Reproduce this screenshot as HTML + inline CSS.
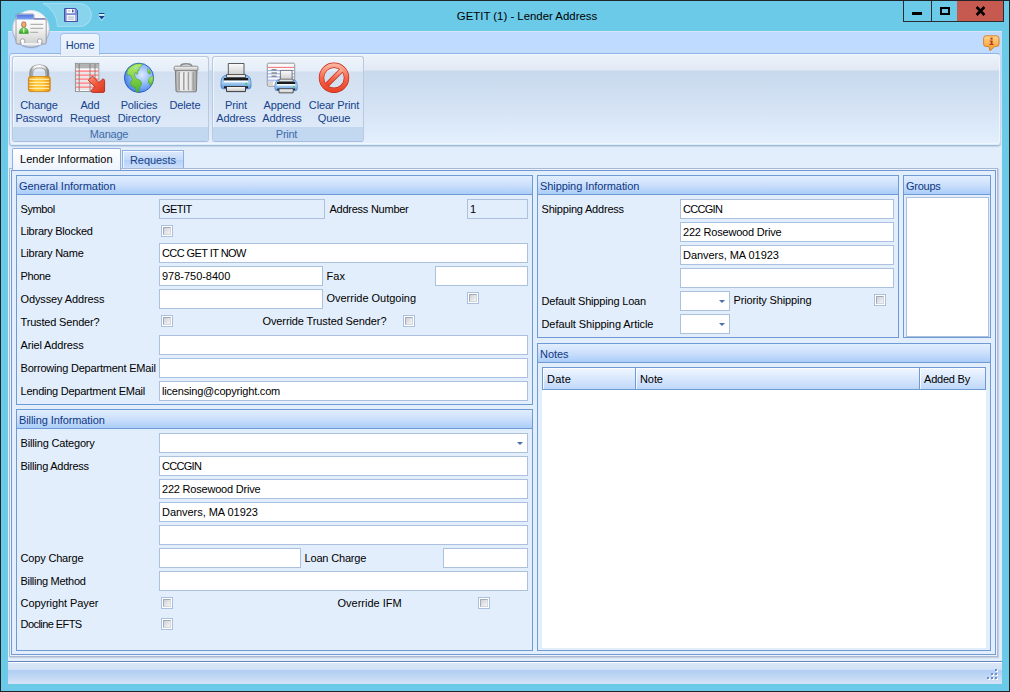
<!DOCTYPE html>
<html><head><meta charset="utf-8"><title>GETIT (1) - Lender Address</title>
<style>
*{box-sizing:border-box;margin:0;padding:0}
html,body{width:1010px;height:692px;overflow:hidden}
body{position:relative;background:#6bcae8;font-family:"Liberation Sans",sans-serif;font-size:11px;color:#000;letter-spacing:-0.15px}
.abs,.lbl,.inp,.cb,.grp,.ghd,.rb,.cmb{position:absolute}
#frame{position:absolute;left:0;top:0;width:1010px;height:692px;border:1px solid #1f2528;pointer-events:none;z-index:50}
#title{position:absolute;left:0;top:9px;width:1054px;text-align:center;font-size:11.4px;letter-spacing:0;color:#000;line-height:14px}
#client{position:absolute;left:8px;top:31px;width:994px;height:653px;background:#e3eefc}
#rhead{position:absolute;left:0;top:0;width:994px;height:115px;background:linear-gradient(#bfdbff 0,#bfdbff 40px,#dde9fb 113px,#e3eefc 115px);border-top:1px solid #d4e7fb}
#rpanel{position:absolute;left:1px;top:22px;width:992px;height:92px;border:1px solid;border-color:#8fb3e6 #c2d9f3 #d9effb #a6c5ee;border-radius:4px;background:linear-gradient(#eef3fa 0,#e1e9f5 16px,#c8d9ed 17px,#d5e3f5 56px,#e4f0fd 100%);box-shadow:inset 0 0 0 1px rgba(240,246,253,.9),0 1px 0 #a3b8d6,0 2px 1px rgba(160,180,210,.45)}
.rgrp{position:absolute;top:2px;height:86px;border:1px solid #b9c9df;border-bottom-color:#a9bedb;border-radius:3px;background:linear-gradient(#eef4fb 0,#e4edf8 14px,#d1dff0 15px,#dde9f8 69px);box-shadow:inset 1px 1px 0 rgba(255,255,255,.55)}
.rgrp .cap{position:absolute;left:0;right:0;bottom:0;height:14px;background:#c2d8f1;color:#3e6aaa;text-align:center;line-height:14px;padding-right:3px;letter-spacing:-.25px;border-radius:0 0 2px 2px}
.rb{top:0;text-align:center;color:#15428b;line-height:13px;white-space:nowrap}
.rb svg{display:block;margin:3px auto 5px}
.lbl{white-space:nowrap;line-height:13px;height:13px}
.inp{height:20px;background:#fff;border:1px solid #abc1de;line-height:18px;padding-left:2px;white-space:nowrap;overflow:hidden}
.inp.ro{background:#e3eefc}
.cb{width:12px;height:12px;border:1px solid #abbfe0;background:#fff;padding:1px}
.cb i{display:block;width:8px;height:8px;border:1px solid #a3abb8;border-right-color:#d4d7dc;border-bottom-color:#d4d7dc;background:linear-gradient(135deg,#cdd1d7,#f5f5f6)}
.grp{border:1px solid #6f9ad3;background:#e3eefc}
.ghd{left:0;top:0;right:0;height:19px;background:linear-gradient(#e2eefe 0,#c9defb 55%,#aacdf8 100%);border-bottom:1px solid #6f9ad3;color:#0f3884;line-height:20px;padding-left:2px}
.arrow{position:absolute;width:0;height:0;border-left:3px solid transparent;border-right:3px solid transparent;border-top:3px solid #4d6ea7}
</style></head><body>
<svg width="0" height="0" style="position:absolute"><defs>
<linearGradient id="gold" x1="0" y1="0" x2="1" y2="0"><stop offset="0" stop-color="#e8930c"/><stop offset=".35" stop-color="#ffc93c"/><stop offset=".65" stop-color="#ffc435"/><stop offset="1" stop-color="#e48a08"/></linearGradient>
<linearGradient id="steel" x1="0" y1="0" x2="1" y2="0"><stop offset="0" stop-color="#9a9a9a"/><stop offset=".2" stop-color="#f4f4f4"/><stop offset=".5" stop-color="#ffffff"/><stop offset=".8" stop-color="#e4e4e4"/><stop offset="1" stop-color="#8a8a8a"/></linearGradient>
<linearGradient id="redg" x1="0" y1="0" x2="1" y2="1"><stop offset="0" stop-color="#ff9a7a"/><stop offset=".5" stop-color="#f0553a"/><stop offset="1" stop-color="#d63a22"/></linearGradient>
<radialGradient id="sea" cx="60%" cy="40%" r="70%"><stop offset="0" stop-color="#dcebff"/><stop offset=".6" stop-color="#7aaaf5"/><stop offset="1" stop-color="#3a74dd"/></radialGradient>
<linearGradient id="land" x1="0" y1="0" x2="0" y2="1"><stop offset="0" stop-color="#b6ee6a"/><stop offset="1" stop-color="#4fb52a"/></linearGradient>
<linearGradient id="can" x1="0" y1="0" x2="1" y2="0"><stop offset="0" stop-color="#a8a8a8"/><stop offset=".3" stop-color="#eeeeee"/><stop offset=".7" stop-color="#e2e2e2"/><stop offset="1" stop-color="#9a9a9a"/></linearGradient>
<linearGradient id="lid" x1="0" y1="0" x2="0" y2="1"><stop offset="0" stop-color="#fafafa"/><stop offset="1" stop-color="#b9b9b9"/></linearGradient>
<linearGradient id="paper" x1="0" y1="0" x2="0" y2="1"><stop offset="0" stop-color="#fdfdfd"/><stop offset="1" stop-color="#c4c4c4"/></linearGradient>
<linearGradient id="prn" x1="0" y1="0" x2="0" y2="1"><stop offset="0" stop-color="#7fb2ea"/><stop offset=".5" stop-color="#a8d2f4"/><stop offset="1" stop-color="#5c93d6"/></linearGradient>
<linearGradient id="nog" x1="0" y1="0" x2="0" y2="1"><stop offset="0" stop-color="#ffb09a"/><stop offset=".5" stop-color="#f4694c"/><stop offset="1" stop-color="#e8452c"/></linearGradient>
</defs></svg>
<div id="title">GETIT (1) - Lender Address</div>
<div class="abs" style="left:903px;top:1px;width:101px;height:21px;border:1px solid #2a2d30;border-top:0"></div>
<div class="abs" style="left:931px;top:1px;width:1px;height:20px;background:#2a2d30"></div>
<div class="abs" style="left:957px;top:1px;width:46px;height:20px;background:#c75a50"></div>
<div class="abs" style="left:912px;top:12px;width:10px;height:3px;background:#000"></div>
<div class="abs" style="left:940px;top:7px;width:10px;height:8px;border:2px solid #000"></div>
<svg class="abs" style="left:975px;top:6px" width="12" height="10" viewBox="0 0 12 10"><path d="M1.6 1 L9.4 9 M9.4 1 L1.6 9" stroke="#000" stroke-width="2.6" fill="none"/></svg>
<div id="client">
 <div id="rhead"></div>
 <div class="abs" style="left:52px;top:2px;width:40px;height:22px;border:1px solid #a5c4ec;border-bottom:0;border-radius:4px 4px 0 0;background:linear-gradient(#edf4fd,#e6eef9);z-index:3;color:#15428b;text-align:center;line-height:22px">Home</div>
 <svg class="abs" style="left:975px;top:4px" width="17" height="17" viewBox="0 0 17 17"><defs><linearGradient id="ig" x1="0" y1="0" x2="0" y2="1"><stop offset="0" stop-color="#ffd28a"/><stop offset="1" stop-color="#f59a28"/></linearGradient></defs>
 <path d="M3 .8 H13.5 Q16 .8 16 3.3 V9 Q16 11.5 13.5 11.5 H11.8 L7 15.8 L6 11.5 H3 Q.6 11.5 .6 9 V3.3 Q.6 .8 3 .8 Z" fill="url(#ig)" stroke="#d67a1a" stroke-width=".9"/>
 <rect x="7.4" y="2.6" width="2.2" height="2" fill="#b4411c"/><path d="M6.6 5.6 H9.6 V9 H10.6 V10 H6.4 V9 H7.6 V6.6 H6.6 Z" fill="#b4411c"/></svg>
<!--FORM-->
<div class="abs" style="left:4px;top:117px;width:109px;height:22px;border:1px solid #8fb0de;border-bottom:0;border-radius:2px 2px 0 0;background:linear-gradient(#fdfeff,#eef4fd);z-index:4;line-height:20px;padding-left:7px;white-space:nowrap"><span style="letter-spacing:0.01px">Lender Information</span></div>
<div class="abs" style="left:114px;top:119px;width:62px;height:19px;border:1px solid #8fb0de;border-bottom:0;background:linear-gradient(#dce9fb 0,#c3dafa 50%,#b4d0f8 51%,#cfe1fb 100%);color:#15428b;line-height:19px;padding-left:7px;box-shadow:inset 1px 1px 0 rgba(255,255,255,.7);white-space:nowrap"><span style="letter-spacing:-0.07px">Requests</span></div>
<div class="abs" style="left:1px;top:137px;width:989px;height:489px;border:1px solid #a9b9d3;background:#eef3fb;box-shadow:1px 1px 1px #c5d0e2"></div>
<div class="abs" style="left:3px;top:139px;width:985px;height:485px;border:1px solid #6f9ad3;background:#e3eefc"></div>
<div class="grp" style="left:8px;top:144px;width:517px;height:230px"><div class="ghd"><span style="letter-spacing:-0.04px">General Information</span></div></div>
<div class="lbl" style="left:12.5px;top:172px;"><span style="letter-spacing:-0.38px">Symbol</span></div>
<div class="inp ro" style="left:151px;top:168px;width:166px"><span style="letter-spacing:-0.56px">GETIT</span></div>
<div class="lbl" style="left:321.5px;top:172px;"><span style="letter-spacing:-0.25px">Address Number</span></div>
<div class="inp ro" style="left:459px;top:168px;width:61px"><span style="letter-spacing:-0.33px">1</span></div>
<div class="lbl" style="left:12.5px;top:194px;"><span style="letter-spacing:-0.24px">Library Blocked</span></div>
<div class="cb" style="left:153px;top:194px"><i></i></div>
<div class="lbl" style="left:12.5px;top:216px;"><span style="letter-spacing:-0.25px">Library Name</span></div>
<div class="inp" style="left:151px;top:212px;width:369px"><span style="letter-spacing:-0.57px">CCC GET IT NOW</span></div>
<div class="lbl" style="left:12.5px;top:239px;"><span style="letter-spacing:-0.34px">Phone</span></div>
<div class="inp" style="left:151px;top:235px;width:164px"><span style="letter-spacing:-0.02px">978-750-8400</span></div>
<div class="lbl" style="left:318.5px;top:239px;"><span style="letter-spacing:0.02px">Fax</span></div>
<div class="inp" style="left:427px;top:235px;width:93px"></div>
<div class="lbl" style="left:12.5px;top:262px;"><span style="letter-spacing:-0.12px">Odyssey Address</span></div>
<div class="inp" style="left:151px;top:258px;width:164px"></div>
<div class="lbl" style="left:318.5px;top:261px;"><span style="letter-spacing:-0.02px">Override Outgoing</span></div>
<div class="cb" style="left:459px;top:261px"><i></i></div>
<div class="lbl" style="left:12.5px;top:285px;"><span style="letter-spacing:-0.17px">Trusted Sender?</span></div>
<div class="cb" style="left:153px;top:284px"><i></i></div>
<div class="lbl" style="left:254.5px;top:284px;"><span style="letter-spacing:-0.11px">Override Trusted Sender?</span></div>
<div class="cb" style="left:395px;top:284px"><i></i></div>
<div class="lbl" style="left:12.5px;top:308px;"><span style="letter-spacing:-0.14px">Ariel Address</span></div>
<div class="inp" style="left:151px;top:304px;width:369px"></div>
<div class="lbl" style="left:12.5px;top:331px;"><span style="letter-spacing:-0.21px">Borrowing Department EMail</span></div>
<div class="inp" style="left:151px;top:327px;width:369px"></div>
<div class="lbl" style="left:12.5px;top:354px;"><span style="letter-spacing:-0.24px">Lending Department EMail</span></div>
<div class="inp" style="left:151px;top:350px;width:369px"><span style="letter-spacing:-0.19px">licensing@copyright.com</span></div>
<div class="grp" style="left:8px;top:378px;width:517px;height:242px"><div class="ghd"><span style="letter-spacing:-0.09px">Billing Information</span></div></div>
<div class="lbl" style="left:12.5px;top:406px;"><span style="letter-spacing:-0.18px">Billing Category</span></div>
<div class="inp" style="left:151px;top:402px;width:369px"><span class="arrow" style="right:4px;top:8px"></span></div>
<div class="lbl" style="left:12.5px;top:429px;"><span style="letter-spacing:-0.26px">Billing Address</span></div>
<div class="inp" style="left:151px;top:425px;width:369px"><span style="letter-spacing:-0.7px">CCCGIN</span></div>
<div class="inp" style="left:151px;top:448px;width:369px"><span style="letter-spacing:-0.21px">222 Rosewood Drive</span></div>
<div class="inp" style="left:151px;top:471px;width:369px"><span style="letter-spacing:-0.04px">Danvers, MA 01923</span></div>
<div class="inp" style="left:151px;top:494px;width:369px"></div>
<div class="lbl" style="left:12.5px;top:521px;"><span style="letter-spacing:-0.17px">Copy Charge</span></div>
<div class="inp" style="left:151px;top:517px;width:142px"></div>
<div class="lbl" style="left:296.5px;top:521px;"><span style="letter-spacing:-0.17px">Loan Charge</span></div>
<div class="inp" style="left:435px;top:517px;width:85px"></div>
<div class="lbl" style="left:12.5px;top:544px;"><span style="letter-spacing:-0.29px">Billing Method</span></div>
<div class="inp" style="left:151px;top:540px;width:369px"></div>
<div class="lbl" style="left:12.5px;top:566px;"><span style="letter-spacing:-0.06px">Copyright Payer</span></div>
<div class="cb" style="left:153px;top:566px"><i></i></div>
<div class="lbl" style="left:329.5px;top:566px;"><span style="letter-spacing:-0.01px">Override IFM</span></div>
<div class="cb" style="left:470px;top:566px"><i></i></div>
<div class="lbl" style="left:12.5px;top:587px;"><span style="letter-spacing:-0.56px">Docline EFTS</span></div>
<div class="cb" style="left:153px;top:587px"><i></i></div>
<div class="grp" style="left:529px;top:144px;width:362px;height:163px"><div class="ghd"><span style="letter-spacing:-0.08px">Shipping Information</span></div></div>
<div class="lbl" style="left:533.5px;top:172px;"><span style="letter-spacing:-0.2px">Shipping Address</span></div>
<div class="inp" style="left:672px;top:168px;width:214px"><span style="letter-spacing:-0.7px">CCCGIN</span></div>
<div class="inp" style="left:672px;top:191px;width:214px"><span style="letter-spacing:-0.21px">222 Rosewood Drive</span></div>
<div class="inp" style="left:672px;top:214px;width:214px"><span style="letter-spacing:-0.04px">Danvers, MA 01923</span></div>
<div class="inp" style="left:672px;top:237px;width:214px"></div>
<div class="lbl" style="left:533.5px;top:264px;"><span style="letter-spacing:-0.18px">Default Shipping Loan</span></div>
<div class="inp" style="left:672px;top:260px;width:50px"><span class="arrow" style="right:4px;top:8px"></span></div>
<div class="lbl" style="left:725.5px;top:263px;"><span style="letter-spacing:-0.13px">Priority Shipping</span></div>
<div class="cb" style="left:866px;top:263px"><i></i></div>
<div class="lbl" style="left:533.5px;top:287px;"><span style="letter-spacing:-0.08px">Default Shipping Article</span></div>
<div class="inp" style="left:672px;top:283px;width:50px"><span class="arrow" style="right:4px;top:8px"></span></div>
<div class="grp" style="left:895px;top:144px;width:88px;height:163px"><div class="ghd"><span style="letter-spacing:-0.26px">Groups</span></div></div>
<div class="abs" style="left:898px;top:166px;width:83px;height:140px;background:#fff;border:1px solid #abc1de"></div>
<div class="grp" style="left:529px;top:312px;width:454px;height:308px"><div class="ghd"><span style="letter-spacing:-0.05px">Notes</span></div></div>
<div class="abs" style="left:534px;top:336px;width:444px;height:281px;background:#fff"></div>
<div class="abs" style="left:534px;top:336px;width:94px;height:23px;border:1px solid #6f9ad3;background:linear-gradient(#f0f6ff 0,#d9e8fd 50%,#bfd8fa 100%);line-height:22px;padding-left:4px;box-shadow:inset 1px 1px 0 rgba(255,255,255,.8)"><span style="letter-spacing:0.19px">Date</span></div>
<div class="abs" style="left:627px;top:336px;width:285px;height:23px;border:1px solid #6f9ad3;background:linear-gradient(#f0f6ff 0,#d9e8fd 50%,#bfd8fa 100%);line-height:22px;padding-left:4px;box-shadow:inset 1px 1px 0 rgba(255,255,255,.8)"><span style="letter-spacing:-0.09px">Note</span></div>
<div class="abs" style="left:911px;top:336px;width:67px;height:23px;border:1px solid #6f9ad3;background:linear-gradient(#f0f6ff 0,#d9e8fd 50%,#bfd8fa 100%);line-height:22px;padding-left:4px;box-shadow:inset 1px 1px 0 rgba(255,255,255,.8)"><span style="letter-spacing:-0.21px">Added By</span></div>
<div class="abs" style="left:0px;top:630px;width:994px;height:1px;background:#5f86c0"></div>
<div class="abs" style="left:0px;top:631px;width:994px;height:1px;background:#fff"></div>
<div class="abs" style="left:0px;top:632px;width:994px;height:21px;background:linear-gradient(#d9e6f8 0,#d3e2f7 30%,#b0cdf3 36%,#c4d9f5 70%,#d6e3f5 100%)"></div>
<div class="abs" style="left:979px;top:638px;width:12px;height:12px;"><i style="position:absolute;left:8px;top:0px;width:2px;height:2px;background:#6a8fcb;box-shadow:1px 1px 0 #fff"></i><i style="position:absolute;left:4px;top:4px;width:2px;height:2px;background:#6a8fcb;box-shadow:1px 1px 0 #fff"></i><i style="position:absolute;left:8px;top:4px;width:2px;height:2px;background:#6a8fcb;box-shadow:1px 1px 0 #fff"></i><i style="position:absolute;left:0px;top:8px;width:2px;height:2px;background:#6a8fcb;box-shadow:1px 1px 0 #fff"></i><i style="position:absolute;left:4px;top:8px;width:2px;height:2px;background:#6a8fcb;box-shadow:1px 1px 0 #fff"></i><i style="position:absolute;left:8px;top:8px;width:2px;height:2px;background:#6a8fcb;box-shadow:1px 1px 0 #fff"></i></div>
<!--/FORM-->
 <div id="rpanel">
<div class="rgrp" style="left:2px;width:197px"><div class="cap">Manage</div></div>
<div class="rgrp" style="left:202px;width:152px"><div class="cap">Print</div></div>
<div class="rb" style="left:-11px;width:80px;top:5px"><svg width="32" height="32" viewBox="0 0 32 32"><path d="M8.2 15.5 V11.5 Q8.2 4.3 16.3 4.3 Q24.4 4.3 24.4 11.5 V15.5" fill="none" stroke="#8c8c8c" stroke-width="3.8"/><path d="M8.2 15.5 V11.5 Q8.2 4.3 16.3 4.3 Q24.4 4.3 24.4 11.5 V15.5" fill="none" stroke="url(#steel)" stroke-width="2.6"/>
<rect x="5.4" y="14.6" width="21.8" height="15" rx="2" fill="url(#gold)" stroke="#c97a0a" stroke-width=".8"/>
<path d="M6.4 17.4 H26.2 M6.4 20.4 H26.2 M6.4 23.4 H26.2 M6.4 26.4 H26.2" stroke="#fff1b8" stroke-width="1.2" opacity=".9"/></svg>Change<br>Password</div>
<div class="rb" style="left:40px;width:80px;top:5px"><svg width="32" height="32" viewBox="0 0 32 32"><rect x="1.4" y="1.4" width="23.4" height="28" fill="#fff" stroke="#8a8a8a" stroke-width=".9"/>
<rect x="1.8" y="1.8" width="22.6" height="4.6" fill="#b4b4b4"/>
<path d="M2 9.2 H24.4 M2 13.2 H24.4 M2 17.2 H24.4 M2 21.2 H24.4 M2 25.2 H24.4" stroke="#ff9296" stroke-width="2"/>
<path d="M2 11.3 H24.4 M2 15.3 H24.4 M2 19.3 H24.4 M2 23.3 H24.4 M2 27.3 H24.4" stroke="#e6e6e6" stroke-width="1.6"/>
<path d="M5.2 1.8 V29 M16 1.8 V29 M21 1.8 V29" stroke="#7c7c7c" stroke-width="1" opacity=".85"/>
<path d="M18.5 14 L14.3 18.2 L20.8 24.7 L17 28.5 Q17 30.4 18.6 30.4 H29 Q30.6 30.4 30.6 29 V18.6 Q30.6 17 28.7 17 L25 20.6 Z" fill="url(#redg)" stroke="#b32a16" stroke-width=".9" stroke-linejoin="round"/></svg>Add<br>Request</div>
<div class="rb" style="left:89px;width:80px;top:5px"><svg width="32" height="32" viewBox="0 0 32 32"><circle cx="16" cy="15.8" r="14.6" fill="url(#sea)" stroke="#2a5fc8" stroke-width="1"/>
<path d="M4.5 8 Q8 3.5 13 2 L19.5 1.8 L18 4.5 L16 6 L15.8 9 L14.5 8.5 L14.8 12 L13.5 12.2 L13 10 L11.5 11.5 L12 15 L13.8 17 Q17.5 17.5 18.5 20.5 Q19 23.5 16.5 25 L15.5 30 L13 30 L12.5 25.5 Q8 25.5 7.5 21.5 Q7.5 19 9.5 17.5 L8 14 L6 12.5 L4.5 14 Q3.5 11 4.5 8 Z" fill="url(#land)" stroke="#3d9a22" stroke-width=".5"/>
<path d="M11 6.5 L13.5 4.5 L14.5 5.2 L12 7.5 Z" fill="#9fd8f0"/>
<path d="M24.5 6.5 L26.5 8 L28 11 L26 12 L24.5 10 Z" fill="url(#land)" stroke="#3d9a22" stroke-width=".4"/>
<path d="M30.3 14.5 Q26 14.5 25.3 18 Q25 21.5 27.8 23.6 Q30.5 20 30.3 14.5 Z" fill="url(#land)" stroke="#3d9a22" stroke-width=".4"/></svg>Policies<br>Directory</div>
<div class="rb" style="left:135px;width:80px;top:5px"><svg width="32" height="32" viewBox="0 0 32 32"><path d="M11.6 4.3 Q11.6 1.7 17.2 1.7 Q22.8 1.7 22.8 4.3" fill="none" stroke="#8a8a8a" stroke-width="1.5"/>
<path d="M6.4 8 H28 L27.4 29 Q27.3 29.8 26.4 29.8 H8 Q7.1 29.8 7 29 Z" fill="url(#can)" stroke="#747474" stroke-width=".9"/>
<path d="M10.2 11 V27.4 M14.9 11 V27.4 M19.6 11 V27.4 M24.3 11 V27.4" stroke="#a2a2a2" stroke-width="1.8" stroke-linecap="round"/>
<path d="M11.5 11.5 V27 M16.2 11.5 V27 M20.9 11.5 V27" stroke="#f8f8f8" stroke-width=".8" stroke-linecap="round"/>
<rect x="5.2" y="4.2" width="23.8" height="4.4" rx="1.2" fill="url(#lid)" stroke="#808080" stroke-width=".9"/></svg>Delete</div>
<div class="rb" style="left:186px;width:80px;top:5px"><svg width="32" height="32" viewBox="0 0 32 32"><g>
 <path d="M8.3 1.5 H24 V15 H8.3 Z" fill="url(#paper)" stroke="#4a4a4a" stroke-width=".9"/>
 <path d="M4.5 13.5 H27.5 Q31 15 31 20 V24.5 Q31 26.8 28.5 26.8 H3.5 Q1 26.8 1 24.5 V20 Q1 15 4.5 13.5 Z" fill="url(#prn)" stroke="#4f7fc0" stroke-width=".8"/>
 <path d="M6.5 12.5 H25.5 V15.5 H6.5 Z" fill="#e6e6e6" stroke="#3a3a3a" stroke-width=".8"/>
 <path d="M3.8 16 H28.2 V18.6 H3.8 Z" fill="#1a1a1a"/><path d="M4 18.6 H28 V20.4 H4 Z" fill="#fff"/>
 <circle cx="26.3" cy="21.8" r="1" fill="#2fd03a"/>
 <path d="M4 24.2 H28 V26.3 H4 Z" fill="#16233c"/>
 <path d="M6.5 24.5 H25.5 V29.6 H6.5 Z" fill="url(#paper)" stroke="#2b2b2b" stroke-width=".9"/>
</g></svg>Print<br>Address</div>
<div class="rb" style="left:232px;width:80px;top:5px"><svg width="32" height="32" viewBox="0 0 32 32"><path d="M2.5 1.2 H27.5 Q28.7 1.2 28.7 2.4 V24.2 H2.5 Q1.3 24.2 1.3 23 V2.4 Q1.3 1.2 2.5 1.2 Z" fill="#fbfbfb" stroke="#8a8a8a" stroke-width=".9"/>
<path d="M2 5.4 H28" stroke="#f27a80" stroke-width="1.1"/><path d="M2 8.6 H28 M2 11.8 H28 M2 15 H28 M2 18.2 H28" stroke="#8aa8f0" stroke-width="1"/>
<path d="M5.5 7.8 H10.5 M5.5 11 H11 M5.5 14.2 H10.5" stroke="#8c8c8c" stroke-width="1.5"/>
<path d="M1.8 19 H8 Q6.5 20 6.8 23.7 H3 Q1.8 23.7 1.8 22.5 Z" fill="#d7d7d7"/>
<g transform="translate(8.2,7.2) scale(.745,.8)"><g>
 <path d="M8.3 1.5 H24 V15 H8.3 Z" fill="url(#paper)" stroke="#4a4a4a" stroke-width=".9"/>
 <path d="M4.5 13.5 H27.5 Q31 15 31 20 V24.5 Q31 26.8 28.5 26.8 H3.5 Q1 26.8 1 24.5 V20 Q1 15 4.5 13.5 Z" fill="url(#prn)" stroke="#4f7fc0" stroke-width=".8"/>
 <path d="M6.5 12.5 H25.5 V15.5 H6.5 Z" fill="#e6e6e6" stroke="#3a3a3a" stroke-width=".8"/>
 <path d="M3.8 16 H28.2 V18.6 H3.8 Z" fill="#1a1a1a"/><path d="M4 18.6 H28 V20.4 H4 Z" fill="#fff"/>
 <circle cx="26.3" cy="21.8" r="1" fill="#2fd03a"/>
 <path d="M4 24.2 H28 V26.3 H4 Z" fill="#16233c"/>
 <path d="M6.5 24.5 H25.5 V29.6 H6.5 Z" fill="url(#paper)" stroke="#2b2b2b" stroke-width=".9"/>
</g></g></svg>Append<br>Address</div>
<div class="rb" style="left:284px;width:80px;top:5px"><svg width="32" height="32" viewBox="0 0 32 32"><circle cx="16" cy="15.8" r="12.5" fill="none" stroke="#c22a16" stroke-width="5.4"/><path d="M7.5 24.3 L24.5 7.3" stroke="#c22a16" stroke-width="5"/>
<circle cx="16" cy="15.8" r="12.5" fill="none" stroke="url(#nog)" stroke-width="4"/><path d="M8 23.8 L24 7.8" stroke="url(#nog)" stroke-width="3.6"/></svg>Clear Print<br>Queue</div>
</div>
</div>
<!-- QAT -->
<svg class="abs" style="left:0;top:0" width="120" height="31" viewBox="0 0 120 31"><path d="M43 3.5 H80 A11.5 11.5 0 0 1 80 26.5 H57.5 A27 27 0 0 0 43 3.5 Z" fill="rgba(255,255,255,.2)" stroke="rgba(255,255,255,.3)" stroke-width="1"/></svg>
<svg class="abs" style="left:63px;top:7px" width="16" height="16" viewBox="0 0 16 16">
 <path d="M1.5 1.5 H12.6 L14.5 3.4 V14.5 H1.5 Z" fill="#7b8dd4" stroke="#44529f" stroke-width="1"/>
 <rect x="3.6" y="2" width="8" height="4.2" fill="#fff"/><rect x="9" y="2.6" width="1.5" height="2.8" fill="#4b589f"/><rect x="5" y="3.6" width="2.4" height=".8" fill="#9aa0b8"/>
 <rect x="3.6" y="8" width="8.6" height="6" fill="#f4f5f9"/><rect x="5" y="9.6" width="6" height="1" fill="#b4b8cb"/><rect x="5" y="11.6" width="6" height="1" fill="#b4b8cb"/>
 <rect x="12.2" y="8" width="1.6" height="6" fill="#a9b6ea"/>
</svg>
<svg class="abs" style="left:98px;top:12px" width="8" height="9" viewBox="0 0 8 9"><rect x="1" y="1" width="5.4" height="1.2" fill="#1a3f94"/><rect x="1" y="2.2" width="5.4" height="1.3" fill="#fff"/><path d="M.6 4 H6.8 L3.7 7.6 Z" fill="#1a3f94"/><path d="M.6 4.6 L3.7 8.4 L6.8 4.6" fill="none" stroke="#fff" stroke-width=".7" opacity=".75"/></svg>
<!-- orb -->
<svg class="abs" style="left:9px;top:7px" width="44" height="44" viewBox="0 0 44 44">
 <defs><radialGradient id="og" cx="50%" cy="35%" r="65%"><stop offset="0" stop-color="#fff"/><stop offset=".72" stop-color="#f3f5f8"/><stop offset="1" stop-color="#c3cbd8"/></radialGradient>
 <linearGradient id="os" x1="0" y1="0" x2="0" y2="1"><stop offset="0" stop-color="#e4ecf4"/><stop offset="1" stop-color="#8fa3bd"/></linearGradient>
 <linearGradient id="cg" x1="0" y1="0" x2="0" y2="1"><stop offset="0" stop-color="#fff"/><stop offset=".45" stop-color="#f6f6f6"/><stop offset="1" stop-color="#d0d0d0"/></linearGradient>
 <linearGradient id="tg" x1="0" y1="0" x2="0" y2="1"><stop offset="0" stop-color="#4f74e0"/><stop offset="1" stop-color="#7fa3ee"/></linearGradient>
 <linearGradient id="pg" x1="0" y1="0" x2="0" y2="1"><stop offset="0" stop-color="#8fe070"/><stop offset="1" stop-color="#2fa31e"/></linearGradient></defs>
 <circle cx="22" cy="22.6" r="19" fill="#7f98b0" opacity=".3"/>
 <circle cx="22" cy="22" r="18.4" fill="url(#og)" stroke="url(#os)" stroke-width="1"/>
 <path d="M7 12.5 V8.2 Q7 7 8.2 7 H23.8 Q25 7 25 8.2 V11.8 H35.8 Q37.2 11.8 37.2 13.2 V35.6 Q37.2 37 35.8 37 H8.4 Q7 37 7 35.6 Z" fill="url(#cg)" stroke="#8a8a92" stroke-width=".8"/>
 <path d="M7.4 12.4 V8.4 Q7.4 7.4 8.4 7.4 H23.6 Q24.6 7.4 24.6 8.4 V12.4 Z" fill="url(#tg)"/>
 <path d="M24.6 12 H36.6" stroke="#5a62ae" stroke-width="1"/>
 <ellipse cx="14.8" cy="17.6" rx="2.3" ry="2.9" fill="#eeaa70" stroke="#8a4a2a" stroke-width=".6"/>
 <path d="M10.2 26.4 Q10.2 20.8 14.8 20.8 Q19.4 20.8 19.4 26.4 Z" fill="url(#pg)" stroke="#2c8f1e" stroke-width=".5"/>
 <path d="M14.3 21.2 h1 v4.6 h-1z" fill="#fff"/>
 <path d="M21.4 17.4 H34.2 M21.4 21.4 H34.2 M21.4 25.4 H29.2" stroke="#b2b2b2" stroke-width="1.1"/>
 <circle cx="13.6" cy="34.2" r="2.4" fill="#fff" stroke="#8e8e96" stroke-width=".8"/><circle cx="30.8" cy="34.2" r="2.4" fill="#fff" stroke="#8e8e96" stroke-width=".8"/>
 <path d="M12.6 37 H31.8" stroke="#fff" stroke-width="1.6"/><path d="M13.6 34.6 V37.2 M30.8 34.6 V37.2" stroke="#fff" stroke-width="1.6"/>
</svg>
<div id="frame"></div>
</body></html>
